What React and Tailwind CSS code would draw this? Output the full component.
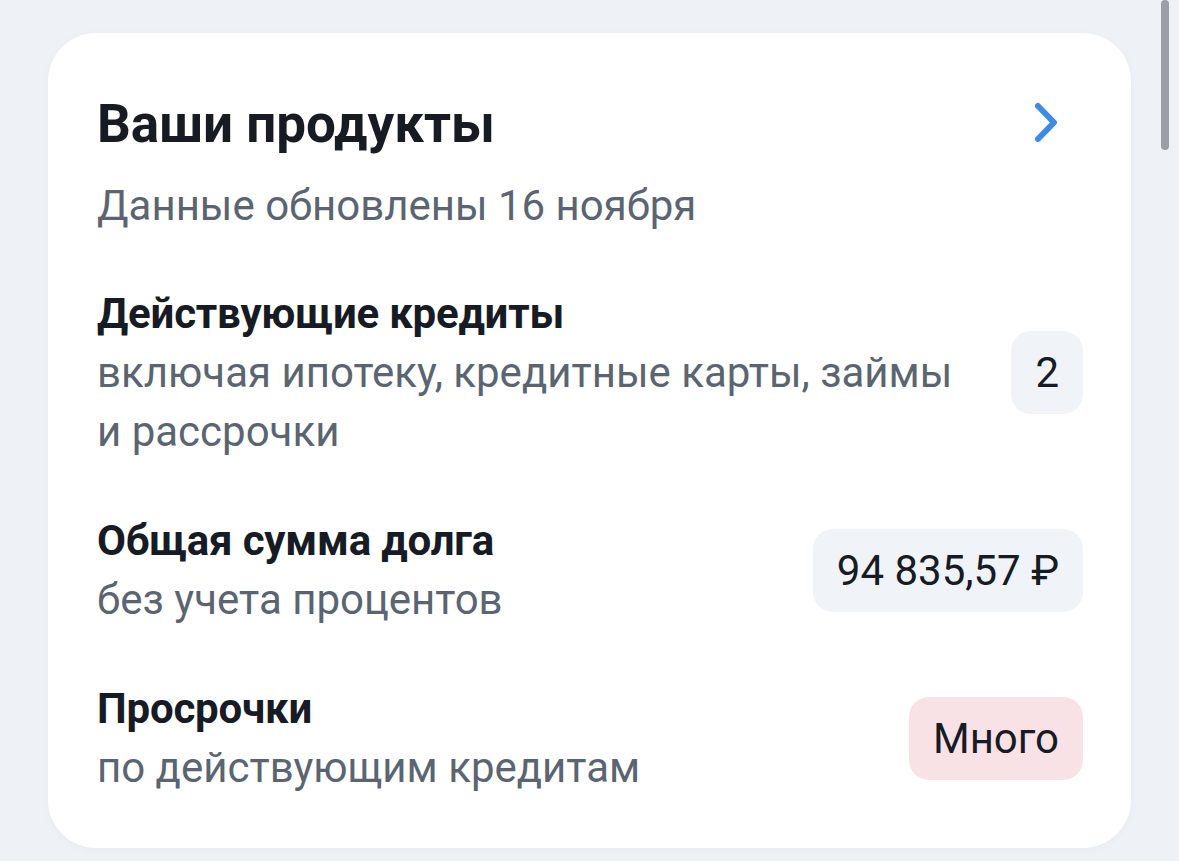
import React from "react";

function Row({ title, lines, badge, pink }) {
  return (
    <div className="flex items-center justify-between">
      <div className="flex flex-col">
        <div className="text-[42px] leading-[59px] font-bold text-[#171b24] tracking-[-0.2px]">{title}</div>
        {lines.map((l, i) => (
          <div key={i} className="text-[42px] leading-[59px] text-[#5b6572]">{l}</div>
        ))}
      </div>
      <div
        className={
          "h-[83px] min-w-[71px] px-[24px] rounded-[20px] flex items-center justify-center text-[42px] text-[#171b24] " +
          (pink ? "bg-[#f9e2e6]" : "bg-[#f0f3f8]")
        }
      >
        {badge}
      </div>
    </div>
  );
}

export default function App() {
  return (
    <div
      className="relative w-[1179px] h-[861px] bg-[#eef1f6] overflow-hidden"
      style={{ fontFamily: "Roboto, 'Noto Sans', sans-serif" }}
    >
      <div className="absolute right-[10px] top-0 w-[8px] h-[150px] rounded-full bg-[#9c9ea5]" />
      <div className="pt-[33px] pl-[48px]">
        <div className="w-[1083px] h-[815px] bg-white rounded-[48px] pl-[49px] pr-[48px] pt-[59px] shadow-[0_2px_10px_rgba(20,30,50,0.03)]">
          <div className="flex items-center justify-between">
            <div className="text-[53px] leading-[64px] font-bold text-[#171b24]">Ваши продукты</div>
            <svg width="30" height="44" viewBox="0 0 30 44" className="mr-[23px]">
              <path d="M8 4 L24 20.5 L8 37" fill="none" stroke="#3d8be6" strokeWidth="6" strokeLinecap="round" strokeLinejoin="round" />
            </svg>
          </div>
          <div className="text-[42px] leading-[59px] text-[#5b6572] mt-[20px]">Данные обновлены 16 ноября</div>
          <div className="flex flex-col gap-[50px] mt-[49px]">
            <Row title="Действующие кредиты" lines={["включая ипотеку, кредитные карты, займы", "и рассрочки"]} badge="2" />
            <Row title="Общая сумма долга" lines={["без учета процентов"]} badge="94 835,57 ₽" />
            <Row title="Просрочки" lines={["по действующим кредитам"]} badge="Много" pink />
          </div>
        </div>
      </div>
    </div>
  );
}
